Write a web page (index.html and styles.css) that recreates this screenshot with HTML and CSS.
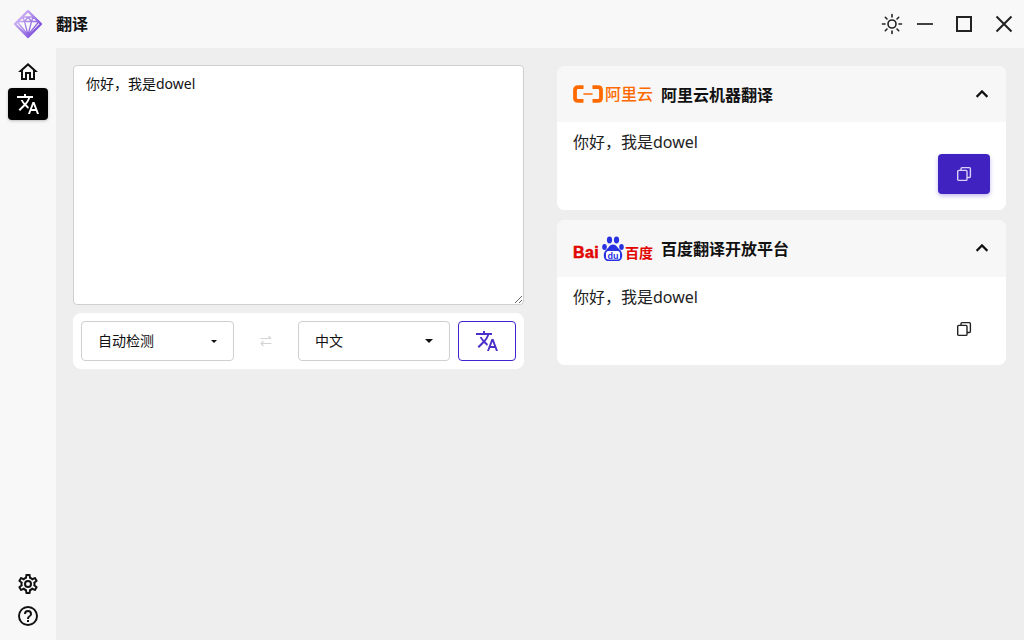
FILE: index.html
```html
<!DOCTYPE html>
<html lang="zh-CN">
<head>
<meta charset="utf-8">
<title>翻译</title>
<link rel="stylesheet" href="styles.css">
</head>
<body>
<div class="app">
  <header class="titlebar">
    <div class="brand">
      <svg class="logo" viewBox="0 0 32 32" fill="none">
        <defs>
          <linearGradient id="gem" x1="4" y1="6" x2="28" y2="26" gradientUnits="userSpaceOnUse">
            <stop offset="0" stop-color="#dcc4f8"/>
            <stop offset="1" stop-color="#6f3fd6"/>
          </linearGradient>
        </defs>
        <path d="M16 3 29 16 16 29 3 16Z" stroke="url(#gem)" stroke-width="2.400" stroke-linejoin="round"/>
        <path d="M5 13.500 11 9 21 9 27 13.500 16 27ZM5 13.500H27M11 9 12.500 13.500 16 27 19.500 13.500 21 9M12.500 13.500 16 9 19.500 13.500" stroke="url(#gem)" stroke-width="1.300" stroke-linejoin="round"/>
      </svg>
      <span class="app-title">翻译</span>
    </div>
    <div class="window-actions">
      <svg class="win-icon sun" viewBox="0 0 24 24" fill="none" stroke="#222" stroke-width="1.600" stroke-linecap="round">
        <circle cx="12" cy="12" r="4"/>
        <path d="M12 2.500V5M12 19V21.500M2.500 12H5M19 12H21.500M5.300 5.300 7 7M17 17 18.700 18.700M5.300 18.700 7 17M17 7 18.700 5.300"/>
      </svg>
      <svg class="win-icon minimize" viewBox="0 0 24 24" fill="none" stroke="#222" stroke-width="1.700">
        <path d="M4 12H20"/>
      </svg>
      <svg class="win-icon" viewBox="0 0 24 24" fill="none" stroke="#222" stroke-width="2">
        <rect x="5" y="5" width="14" height="14"/>
      </svg>
      <svg class="win-icon" viewBox="0 0 24 24" fill="none" stroke="#222" stroke-width="2">
        <path d="M4.500 4.500 19.500 19.500M19.500 4.500 4.500 19.500"/>
      </svg>
    </div>
  </header>

  <div class="body">
    <nav class="sidebar">
      <div class="nav-group">
        <a class="nav-item">
          <svg class="nav-icon" viewBox="0 0 24 24"><path d="M12 5.690 17 10.190V18H15V12H9V18H7V10.190L12 5.690M12 3 2 12H5V20H11V14H13V20H19V12H22L12 3Z"/></svg>
        </a>
        <a class="nav-item active">
          <svg class="nav-icon" viewBox="0 0 24 24"><path d="M12.870 15.070 10.330 12.560 10.360 12.530C12.100 10.590 13.340 8.360 14.070 6H17V4H10V2H8V4H1V6H12.170C11.500 7.920 10.440 9.750 9 11.350 8.070 10.320 7.300 9.190 6.690 8H4.690C5.420 9.630 6.420 11.170 7.670 12.560L2.580 17.580 4 19 9 14 12.110 17.110 12.870 15.070M18.500 10H16.500L12 22H14L15.120 19H19.870L21 22H23L18.500 10M15.880 17 17.500 12.670 19.120 17H15.880Z"/></svg>
        </a>
      </div>
      <div class="nav-group">
        <a class="nav-item">
          <svg class="nav-icon" viewBox="0 0 24 24"><path d="M12,8A4,4 0 0,1 16,12A4,4 0 0,1 12,16A4,4 0 0,1 8,12A4,4 0 0,1 12,8M12,10A2,2 0 0,0 10,12A2,2 0 0,0 12,14A2,2 0 0,0 14,12A2,2 0 0,0 12,10M10,22C9.750,22 9.540,21.820 9.500,21.580L9.130,18.930C8.500,18.680 7.960,18.340 7.440,17.940L4.950,18.950C4.730,19.030 4.460,18.950 4.340,18.730L2.340,15.270C2.210,15.050 2.270,14.780 2.460,14.630L4.570,12.970L4.500,12L4.570,11L2.460,9.370C2.270,9.220 2.210,8.950 2.340,8.730L4.340,5.270C4.460,5.050 4.730,4.960 4.950,5.050L7.440,6.050C7.960,5.660 8.500,5.320 9.130,5.070L9.500,2.420C9.540,2.180 9.750,2 10,2H14C14.250,2 14.460,2.180 14.500,2.420L14.870,5.070C15.500,5.320 16.040,5.660 16.560,6.050L19.050,5.050C19.270,4.960 19.540,5.050 19.660,5.270L21.660,8.730C21.790,8.950 21.730,9.220 21.540,9.370L19.430,11L19.500,12L19.430,13L21.540,14.630C21.730,14.780 21.790,15.050 21.660,15.270L19.660,18.730C19.540,18.950 19.270,19.040 19.050,18.950L16.560,17.950C16.040,18.340 15.500,18.680 14.870,18.930L14.500,21.580C14.460,21.820 14.250,22 14,22H10M11.250,4L10.880,6.610C9.680,6.860 8.620,7.500 7.850,8.390L5.440,7.350L4.690,8.650L6.800,10.200C6.400,11.370 6.400,12.640 6.800,13.800L4.680,15.360L5.430,16.660L7.860,15.620C8.630,16.500 9.680,17.140 10.870,17.380L11.240,20H12.760L13.130,17.390C14.320,17.140 15.370,16.500 16.140,15.620L18.570,16.660L19.320,15.360L17.200,13.810C17.600,12.640 17.600,11.370 17.200,10.200L19.310,8.650L18.560,7.350L16.150,8.390C15.380,7.500 14.320,6.860 13.120,6.620L12.750,4H11.250Z"/></svg>
        </a>
        <a class="nav-item">
          <svg class="nav-icon" viewBox="0 0 24 24"><path d="M11,18H13V16H11V18M12,2A10,10 0 0,0 2,12A10,10 0 0,0 12,22A10,10 0 0,0 22,12A10,10 0 0,0 12,2M12,20C7.590,20 4,16.410 4,12C4,7.590 7.590,4 12,4C16.410,4 20,7.590 20,12C20,16.410 16.410,20 12,20M12,6A4,4 0 0,0 8,10H10A2,2 0 0,1 12,8A2,2 0 0,1 14,10C14,12 11,11.750 11,15H13C13,12.750 16,12.500 16,10A4,4 0 0,0 12,6Z"/></svg>
        </a>
      </div>
    </nav>

    <main class="content">
      <section class="source">
        <textarea class="source-input">你好，我是dowel</textarea>
        <div class="controls">
          <div class="select from">
            <span>自动检测</span>
            <i class="caret small"></i>
          </div>
          <div class="swap">
            <svg class="swap-icon" viewBox="0 0 16 16" fill="none" stroke="#d4d4d4" stroke-width="1.100">
              <path d="M2.500 5.500H13M10.500 3 13 5.500M13.500 10.500H3M5.500 8 3 10.500 5.500 13"/>
            </svg>
          </div>
          <div class="select to">
            <span>中文</span>
            <i class="caret"></i>
          </div>
          <button class="translate-btn">
            <svg class="translate-icon" viewBox="0 0 24 24"><path d="M12.870 15.070 10.330 12.560 10.360 12.530C12.100 10.590 13.340 8.360 14.070 6H17V4H10V2H8V4H1V6H12.170C11.500 7.920 10.440 9.750 9 11.350 8.070 10.320 7.300 9.190 6.690 8H4.690C5.420 9.630 6.420 11.170 7.670 12.560L2.580 17.580 4 19 9 14 12.110 17.110 12.870 15.070M18.500 10H16.500L12 22H14L15.120 19H19.870L21 22H23L18.500 10M15.880 17 17.500 12.670 19.120 17H15.880Z"/></svg>
          </button>
        </div>
      </section>

      <section class="results">
        <article class="card">
          <header class="card-head">
            <div class="card-title">
              <div class="ali-logo">
                <svg class="ali-mark" viewBox="0 0 30 18" fill="none" stroke="#ff6a00">
                  <path d="M10.500 2.200H5C3 2.200 2 3.200 2 5V13C2 14.800 3 15.800 5 15.800H10.500M19.500 2.200H25C27 2.200 28 3.200 28 5V13C28 14.800 27 15.800 25 15.800H19.500" stroke-width="3.800"/>
                  <path d="M10.500 9H19.500" stroke-width="1.600"/>
                </svg>
                <span class="ali-text">阿里云</span>
              </div>
              <span>阿里云机器翻译</span>
            </div>
            <svg class="chevron" viewBox="0 0 24 24"><path d="M7.410 15.410 12 10.830 16.590 15.410 18 14 12 8 6 14 7.410 15.410Z"/></svg>
          </header>
          <div class="card-body">
            <p class="result-text">你好，我是dowel</p>
            <div class="card-actions">
              <button class="copy-btn primary">
                <svg class="copy-icon" viewBox="0 0 16 16" fill="none" stroke="currentColor" stroke-width="1.400"><rect x="1.700" y="4.400" width="9.300" height="10" rx="1"/><path d="M5 4.400V2.700C5 2 5.400 1.600 6 1.600H13.300C14 1.600 14.400 2 14.400 2.700V10.500C14.400 11.100 14 11.500 13.300 11.500H11"/></svg>
              </button>
            </div>
          </div>
        </article>

        <article class="card">
          <header class="card-head tall">
            <div class="card-title">
              <div class="baidu-logo">
                <span class="bai">Bai</span>
                <svg class="paw" viewBox="0 0 24 26">
                  <ellipse cx="3.500" cy="11" rx="2.300" ry="3"/>
                  <ellipse cx="8.500" cy="4" rx="2.600" ry="3.400"/>
                  <ellipse cx="15.500" cy="4" rx="2.600" ry="3.400"/>
                  <ellipse cx="20.500" cy="11" rx="2.300" ry="3"/>
                  <path d="M12 8.500C8.500 8.500 7.500 12 5 14 1.500 17 2 25 7.500 25H16.500C22 25 22.500 17 19 14 16.500 12 15.500 8.500 12 8.500Z"/>
                  <rect class="paw-inset" x="5" y="15" width="14" height="8.500" rx="2.500"/>
                  <text x="12" y="22.500" class="paw-text">du</text>
                </svg>
                <span class="baidu-cn">百度</span>
              </div>
              <span>百度翻译开放平台</span>
            </div>
            <svg class="chevron" viewBox="0 0 24 24"><path d="M7.410 15.410 12 10.830 16.590 15.410 18 14 12 8 6 14 7.410 15.410Z"/></svg>
          </header>
          <div class="card-body">
            <p class="result-text">你好，我是dowel</p>
            <div class="card-actions">
              <button class="copy-btn">
                <svg class="copy-icon" viewBox="0 0 16 16" fill="none" stroke="currentColor" stroke-width="1.400"><rect x="1.700" y="4.400" width="9.300" height="10" rx="1"/><path d="M5 4.400V2.700C5 2 5.400 1.600 6 1.600H13.300C14 1.600 14.400 2 14.400 2.700V10.500C14.400 11.100 14 11.500 13.300 11.500H11"/></svg>
              </button>
            </div>
          </div>
        </article>
      </section>
    </main>
  </div>
</div>
</body>
</html>
```
FILE: styles.css
```css
* { box-sizing: border-box; }

html, body {
  margin: 0;
  height: 100%;
}

body {
  font-family: "Noto Sans", "Noto Sans CJK SC", sans-serif;
  color: #111;
  background: #eeeeee;
  overflow: hidden;
}

.app {
  height: 640px;
  display: flex;
  flex-direction: column;
}

.titlebar {
  height: 48px;
  flex: none;
  display: flex;
  align-items: center;
  justify-content: space-between;
  background: #f8f8f8;
}

.brand {
  display: flex;
  align-items: center;
  gap: 12px;
  padding-left: 12px;
}

.logo { width: 32px; height: 32px; }

.app-title {
  font-size: 16px;
  font-weight: 600;
  line-height: 24px;
}

.window-actions {
  display: flex;
  align-items: center;
  gap: 8px;
  padding-right: 4px;
}

.win-icon {
  width: 32px;
  height: 32px;
  padding: 4px;
  display: block;
}

.win-icon.sun { margin-right: -7px; }
.win-icon.minimize { margin-right: -1px; }

.body {
  flex: 1;
  display: flex;
  min-height: 0;
}

.sidebar {
  width: 56px;
  flex: none;
  background: #f8f8f8;
  display: flex;
  flex-direction: column;
  justify-content: space-between;
  align-items: center;
  padding: 8px 0;
}

.nav-group {
  display: flex;
  flex-direction: column;
  align-items: center;
}

.nav-item {
  width: 40px;
  height: 32px;
  display: flex;
  align-items: center;
  justify-content: center;
  border-radius: 4px;
  color: #111;
}

.nav-item.active {
  background: #000;
  color: #fff;
  box-shadow: 0 1px 3px rgba(0, 0, 0, .25);
}

.nav-icon {
  width: 24px;
  height: 24px;
  fill: currentColor;
}

.content {
  flex: 1;
  min-width: 0;
  display: grid;
  grid-template-columns: 451px 449px;
  column-gap: 33px;
  align-items: start;
  padding: 17px 0 0 17px;
}

.source {
  display: flex;
  flex-direction: column;
  gap: 8px;
}

.source-input {
  display: block;
  width: 100%;
  height: 240px;
  padding: 8px 12px;
  border: 1px solid #cfcfcf;
  border-radius: 4px;
  font: 14px/20px "Noto Sans", "Noto Sans CJK SC", sans-serif;
  color: #111;
  background: #fff;
  outline: none;
  margin: 0;
}

.controls {
  height: 56px;
  display: flex;
  align-items: center;
  padding: 0 8px;
  background: #fff;
  border-radius: 8px;
}

.select {
  height: 40px;
  display: flex;
  align-items: center;
  justify-content: space-between;
  padding: 0 16px 2px;
  border: 1px solid #cfcfcf;
  border-radius: 4px;
  font-size: 14px;
}

.select.from { width: 153px; flex: none; }
.select.to { flex: 1; min-width: 0; }

.caret {
  width: 0;
  height: 0;
  margin-top: 2px;
  border-left: 4px solid transparent;
  border-right: 4px solid transparent;
  border-top: 4px solid #111;
}

.caret.small {
  border-left-width: 3px;
  border-right-width: 3px;
  border-top-width: 3px;
}

.swap {
  width: 64px;
  flex: none;
  display: flex;
  justify-content: center;
}

.swap-icon { width: 16px; height: 16px; }

.translate-btn {
  width: 58px;
  height: 40px;
  flex: none;
  margin-left: 8px;
  padding: 0;
  display: flex;
  align-items: center;
  justify-content: center;
  border: 1px solid #3f22d0;
  border-radius: 4px;
  background: #fff;
}

.translate-icon {
  width: 24px;
  height: 24px;
  fill: #4b2fc9;
}

.results {
  display: flex;
  flex-direction: column;
  gap: 10px;
  margin-top: 1px;
}

.card {
  background: #fff;
  border-radius: 8px;
  overflow: hidden;
}

.card-head {
  height: 56px;
  display: flex;
  align-items: center;
  justify-content: space-between;
  padding: 0 12px 0 16px;
  background: #f7f7f7;
}

.card-head.tall {
  height: 57px;
  padding-bottom: 1px;
}

.card-title {
  display: flex;
  align-items: center;
  gap: 8px;
  font-size: 16px;
  font-weight: 600;
}

.chevron {
  width: 24px;
  height: 24px;
  fill: #111;
  stroke: #111;
  stroke-width: .4;
  display: block;
}

.ali-logo {
  width: 80px;
  display: flex;
  align-items: center;
  gap: 2px;
  overflow: hidden;
}

.ali-mark { width: 30px; height: 18px; flex: none; }

.ali-text {
  font-size: 16px;
  font-weight: 500;
  line-height: 20px;
  color: #ff6a00;
  white-space: nowrap;
}

.baidu-logo {
  width: 80px;
  height: 28px;
  display: flex;
  align-items: flex-end;
  font-weight: 700;
  color: #e10601;
}

.bai {
  font: 700 16px/16px "Liberation Sans", sans-serif;
  letter-spacing: .4px;
  -webkit-text-stroke: .5px #e10601;
  padding-bottom: 1px;
}

.paw {
  width: 24px;
  height: 26px;
  flex: none;
  fill: #2932e1;
  margin-left: 2px;
}

.paw-inset { fill: #fff; }

.paw-text {
  font: 700 9px "Liberation Sans", sans-serif;
  fill: #2932e1;
  text-anchor: middle;
}

.baidu-cn {
  font-size: 14px;
  font-weight: 700;
  line-height: 16px;
  padding-bottom: 1px;
  white-space: nowrap;
}

.card-body {
  padding: 8px 16px 16px;
  background: #fff;
}

.result-text {
  margin: 0;
  font-size: 16px;
  line-height: 24px;
  color: #222;
}

.card-actions {
  display: flex;
  justify-content: flex-end;
}

.copy-btn {
  width: 52px;
  height: 40px;
  padding: 0;
  display: flex;
  align-items: center;
  justify-content: center;
  border: 0;
  border-radius: 4px;
  background: transparent;
  color: #222;
}

.copy-btn.primary {
  background: #3f22c0;
  color: #d8d2f5;
  box-shadow: 0 2px 4px rgba(63, 34, 192, .3);
}

.copy-icon { width: 16px; height: 16px; }
```
